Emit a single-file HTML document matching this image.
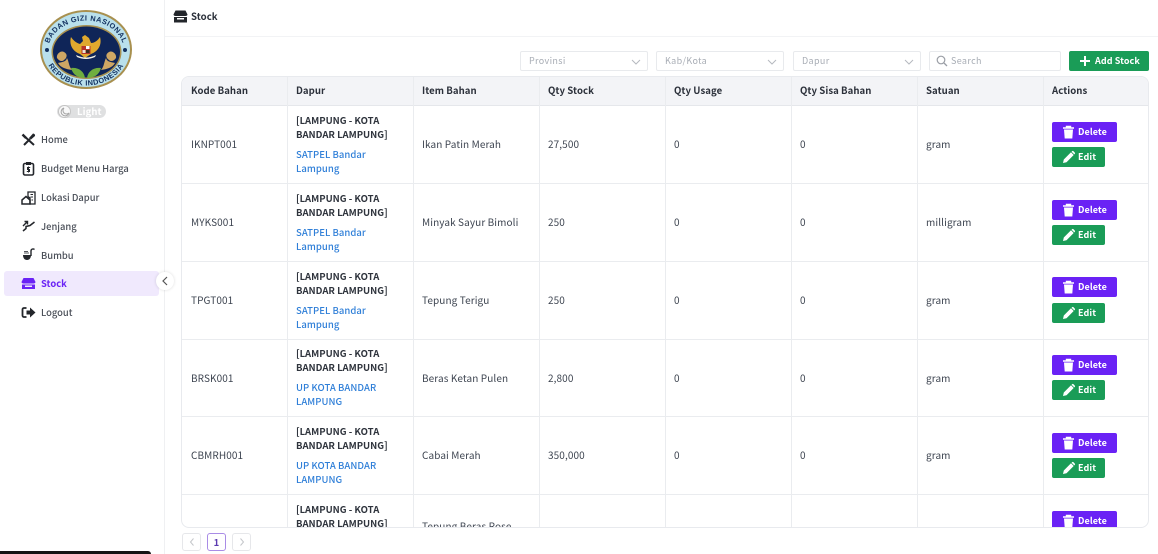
<!DOCTYPE html>
<html><head><meta charset="utf-8"><style>
*{box-sizing:border-box;margin:0;padding:0}
html,body{width:1158px;height:554px;overflow:hidden;background:#fff}
body{position:relative;font-family:"Noto Sans CJK JP","Liberation Sans",sans-serif;font-size:10px;color:#3d4450;letter-spacing:.1px}
.abs{position:absolute}
.nav{position:absolute;left:41px;font-size:9.4px;letter-spacing:0;font-weight:500;color:#4a4f58;line-height:14px;white-space:nowrap}
.ic{position:absolute;left:21px;width:15px;height:15px}
.sel{position:absolute;top:51px;height:20px;border:1px solid #e8eaed;border-radius:2px;color:#a8adb5;font-size:9px;letter-spacing:.35px;line-height:17px;padding-left:8px}
.sel svg{position:absolute;right:6px;top:6px}
.tw{position:absolute;left:181px;top:76px;width:968px;height:452px;border:1px solid #e8eaee;border-radius:8px;overflow:hidden}
.h{position:absolute;left:0;top:0;width:968px;height:29px;background:#f3f4f7;border-bottom:1px solid #e5e7eb}
.v{position:absolute;top:0;width:1px;height:452px;background:#eaecef}
.l{position:absolute;left:0;width:968px;height:1px;background:#eaecef}
.t{position:absolute;white-space:nowrap;line-height:14px;margin-top:-1px}
.th{font-weight:700;font-size:9.6px;letter-spacing:.05px;color:#2b303a;top:7px}
.d{font-weight:700;color:#2f343d;font-size:9.5px;letter-spacing:0;margin-top:0}
.s{color:#2f7fd8;font-weight:500;font-size:9.5px;letter-spacing:.05px}
.btn{position:absolute;height:20px;border-radius:2px;color:#fff;font-weight:600;font-size:9px;letter-spacing:.08px;line-height:20px;white-space:nowrap}
.del{left:870px;width:65px;background:#6a22f5}
.ed{left:870px;width:53px;background:#1a9c57}
.btn svg{position:absolute;left:10px;top:3px}
.btn span{position:absolute;left:26px;top:0}
.pg{position:absolute;top:533px;width:19px;height:18px;border:1px solid #e6e7ea;border-radius:3px;text-align:center}
</style></head><body>
<div class="abs" style="left:164px;top:0;width:1px;height:554px;background:#eff0f2"></div>
<div class="abs" style="left:165px;top:36px;width:993px;height:1px;background:#f2f3f5"></div>

<svg class="abs" style="left:38px;top:8px" width="96" height="84" viewBox="0 0 96 84">
<defs><path id="a1" d="M10 43A38 30.500 0 0 1 86 43"/><path id="a2" d="M7 44A41 33.500 0 0 0 89 44"/></defs>
<ellipse cx="48" cy="41.5" rx="46" ry="39.500" fill="#a8904f"/>
<ellipse cx="48" cy="41.5" rx="44" ry="37.500" fill="#b9e0ec"/>
<ellipse cx="48.500" cy="44" rx="35" ry="27" fill="#a8904f"/>
<ellipse cx="48.500" cy="44" rx="33.500" ry="25.500" fill="#0f2558"/>
<text font-family="Liberation Sans,sans-serif" font-size="7.400" font-weight="700" fill="#12305f" letter-spacing=".45"><textPath href="#a1" startOffset="50%" text-anchor="middle">BADAN GIZI NASIONAL</textPath></text>
<text font-family="Liberation Sans,sans-serif" font-size="7.400" font-weight="700" fill="#12305f" letter-spacing=".45"><textPath href="#a2" startOffset="50%" text-anchor="middle">REPUBLIK INDONESIA</textPath></text>
<circle cx="9" cy="42" r="2" fill="#12305f"/><circle cx="87" cy="42" r="2" fill="#12305f"/>
<path d="M33 29C31 36 34 43 42 46L47 50L53 46C61 43 64 36 62 29C60 32 57 35 53 35L51 30L47 27L44 29L45 33L42 36C38 35 35 32 33 29Z" fill="#e0a92e"/>
<rect x="43.500" y="38" width="9" height="8" fill="#b8352b"/><rect x="48" y="38" width="3.500" height="3" fill="#fff"/><rect x="44.500" y="42" width="3" height="3" fill="#e8e4d6"/><rect x="48" y="42" width="3.500" height="3" fill="#3a2c20"/>
<path d="M38 47Q48 52 58 47L57 49Q48 53 39 49Z" fill="#f3f0e4"/>
<path d="M19 50C18 46 23 42 26 44C30 46 29 50 26 52C24 54 21 53 19 50ZM20 55C24 54 28 54 29 50C31 54 31 59 34 62C28 61 23 60 20 55Z" fill="#cfa764"/>
<path d="M78 50C79 46 74 42 71 44C67 46 68 50 71 52C73 54 76 53 78 50ZM77 55C73 54 69 54 68 50C66 54 66 59 63 62C69 61 74 60 77 55Z" fill="#cfa764"/>
<path d="M33 60C40 59 46 63 47 70C40 70 35 67 33 60Z" fill="#6fae3f"/><path d="M63 60C56 59 50 63 49 70C56 70 61 67 63 60Z" fill="#6fae3f"/>
</svg>

<div class="abs" style="left:57px;top:105px;width:49px;height:13px;border-radius:7px;background:#dfe0e1"></div>
<div class="abs" style="left:58px;top:105px;width:13px;height:13px;border-radius:50%;background:#f8f8f8;border:1px solid #c4c4c4"></div>
<svg class="abs" style="left:60px;top:107px" width="10" height="10" viewBox="0 0 10 10"><path d="M4 1A4 4 0 1 0 9 6A3.400 3.400 0 0 1 4 1Z" fill="none" stroke="#a5a5a5" stroke-width="1"/></svg>
<div class="abs" style="left:77px;top:104px;font-size:9.500px;font-weight:700;color:#fff;line-height:15px">Light</div>

<div class="abs" style="left:4px;top:271px;width:155px;height:25px;border-radius:3px;background:#f0e9fd"></div>

<svg class="ic" style="top:132px" viewBox="0 0 15 15"><path d="M2 3L13 13M3 13L9 7" stroke="#23262b" stroke-width="2" fill="none"/><path d="M8 6L12 1.500A2 2 0 0 1 14 4L10 7.500Z" fill="#23262b"/><path d="M1.500 2.500L5 6" stroke="#23262b" stroke-width="2.400"/></svg>
<div class="nav" style="top:132px">Home</div>
<svg class="ic" style="top:161px" viewBox="0 0 15 15"><rect x="2.500" y="2.500" width="10" height="11.500" rx="1.500" fill="none" stroke="#23262b" stroke-width="1.600"/><rect x="5" y="1" width="5" height="3" fill="#23262b"/><path d="M9.200 6.500H6.500V8.500H8.500V10.500H5.800M7.500 5.500V11.500" stroke="#23262b" fill="none"/></svg>
<div class="nav" style="top:161px">Budget Menu Harga</div>
<svg class="ic" style="top:190px" viewBox="0 0 15 15"><path d="M7 2H14V14H9V8L7 6.500Z" fill="none" stroke="#23262b" stroke-width="1.300"/><path d="M1 10L5 6.500L9 10V14H1Z" fill="none" stroke="#23262b" stroke-width="1.500"/><path d="M9.500 4.500H12M9.500 7H12M10.500 10H12" stroke="#23262b"/></svg>
<div class="nav" style="top:190px">Lokasi Dapur</div>
<svg class="ic" style="top:218px" viewBox="0 0 15 15"><path d="M2 13L5 10.500V8.500L9 7.500L13.500 4" stroke="#23262b" stroke-width="1.500" fill="none"/><path d="M2 8L6 4M3.500 3.500H6.500V6.500" stroke="#23262b" stroke-width="1.400" fill="none"/></svg>
<div class="nav" style="top:219px">Jenjang</div>
<svg class="ic" style="top:247px" viewBox="0 0 15 15"><path d="M2 8H10C10 11 8.500 13 6 13C3.500 13 2 11 2 8Z" fill="#23262b"/><path d="M10 9V4C10 2 12 1.500 13.500 2.500" stroke="#23262b" stroke-width="1.400" fill="none"/><path d="M3 6H8M3 4.500H7" stroke="#55585e" stroke-width=".9"/></svg>
<div class="nav" style="top:248px">Bumbu</div>
<svg class="ic" style="top:276px" viewBox="0 0 15 15"><path d="M2.500 2H12.500L14.500 6C14.500 7 13.500 7.500 12.500 7.500H2.500C1.500 7.500 .5 7 .5 6Z" fill="#6a22f5"/><path d="M1 8.500H14V13H1Z" fill="#6a22f5"/><rect x="4" y="9.500" width="7" height="1.500" fill="#f0e9fd"/></svg>
<div class="nav" style="top:276px;color:#6a22f5;font-weight:700">Stock</div>
<svg class="ic" style="top:305px" viewBox="0 0 15 15"><path d="M5.500 3H3A1.500 1.500 0 0 0 1.500 4.500V10.500A1.500 1.500 0 0 0 3 12H5.500" stroke="#23262b" stroke-width="1.800" fill="none"/><path d="M5.500 5.500H9V2.500L14.500 7.500L9 12.500V9.500H5.500Z" fill="#23262b"/></svg>
<div class="nav" style="top:305px">Logout</div>

<div class="abs" style="left:156px;top:272px;width:18px;height:18px;border-radius:50%;background:#fff;box-shadow:0 0 3px rgba(0,0,0,.14)"></div>
<svg class="abs" style="left:161px;top:276px" width="8" height="10" viewBox="0 0 8 10"><path d="M6 1L2 5L6 9" stroke="#555" stroke-width="1.200" fill="none"/></svg>
<div class="abs" style="left:0;top:551px;width:151px;height:3px;background:#141414;border-radius:0 3px 0 0"></div>

<svg class="abs" style="left:173px;top:10px" width="15" height="13" viewBox="0 0 15 13"><path d="M2.500 .5H12.500L14.500 4.500C14.500 5.500 13.500 6 12.500 6H2.500C1.500 6 .5 5.500 .5 4.500Z" fill="#23262b"/><path d="M1 7H14V12.500H1Z" fill="#23262b"/><rect x="4" y="8" width="7" height="1.500" fill="#fff"/></svg>
<div class="abs" style="left:191px;top:9px;font-size:9.600px;letter-spacing:.05px;font-weight:700;color:#2b303a;line-height:15px">Stock</div>

<div class="sel" style="left:520px;width:128px">Provinsi<svg width="10" height="8" viewBox="0 0 10 8"><path d="M1 2L5 6L9 2" stroke="#b5b9bf" fill="none"/></svg></div>
<div class="sel" style="left:656px;width:128px">Kab/Kota<svg width="10" height="8" viewBox="0 0 10 8"><path d="M1 2L5 6L9 2" stroke="#b5b9bf" fill="none"/></svg></div>
<div class="sel" style="left:793px;width:128px">Dapur<svg width="10" height="8" viewBox="0 0 10 8"><path d="M1 2L5 6L9 2" stroke="#b5b9bf" fill="none"/></svg></div>
<div class="sel" style="left:929px;width:132px;padding-left:21px">Search<svg style="left:6px;right:auto;top:3px" width="12" height="12" viewBox="0 0 12 12"><circle cx="5" cy="5" r="3.800" stroke="#9a9ea5" stroke-width="1.200" fill="none"/><path d="M8 8L11 11" stroke="#9a9ea5" stroke-width="1.300"/></svg></div>
<div class="btn" style="left:1069px;top:51px;width:80px;background:#1a9c57"><svg style="top:4px" width="12" height="12" viewBox="0 0 12 12"><path d="M6 1V11M1 6H11" stroke="#fff" stroke-width="2"/></svg><span>Add Stock</span></div>

<div class="tw">
<div class="h"></div>
<div class="v" style="left:105px"></div><div class="v" style="left:231px"></div><div class="v" style="left:357px"></div><div class="v" style="left:483px"></div><div class="v" style="left:609px"></div><div class="v" style="left:735px"></div><div class="v" style="left:861px"></div>
<div class="t th" style="left:9px">Kode Bahan</div><div class="t th" style="left:114px">Dapur</div><div class="t th" style="left:240px">Item Bahan</div><div class="t th" style="left:366px">Qty Stock</div><div class="t th" style="left:492px">Qty Usage</div><div class="t th" style="left:618px">Qty Sisa Bahan</div><div class="t th" style="left:744px">Satuan</div><div class="t th" style="left:870px">Actions</div>

<div class="l" style="top:106px"></div><div class="l" style="top:184px"></div><div class="l" style="top:262px"></div><div class="l" style="top:339px"></div><div class="l" style="top:417px"></div>

<div class="t" style="left:9px;top:61px">IKNPT001</div>
<div class="t d" style="left:114px;top:36px">[LAMPUNG - KOTA</div><div class="t d" style="left:114px;top:50px">BANDAR LAMPUNG]</div><div class="t s" style="left:114px;top:71px">SATPEL Bandar</div><div class="t s" style="left:114px;top:85px">Lampung</div>
<div class="t" style="left:240px;top:61px">Ikan Patin Merah</div><div class="t" style="left:366px;top:61px">27,500</div><div class="t" style="left:492px;top:61px">0</div><div class="t" style="left:618px;top:61px">0</div><div class="t" style="left:744px;top:61px">gram</div>
<div class="btn del" style="top:45px"><svg width="13" height="14" viewBox="0 0 13 14"><path d="M1 3H12M4.500 3V1.500H8.500V3" stroke="#fff" stroke-width="1.400" fill="none"/><path d="M2 4.500H11L10.300 13.500H2.700Z" fill="#fff"/></svg><span>Delete</span></div>
<div class="btn ed" style="top:70px"><svg width="14" height="14" viewBox="0 0 14 14"><path d="M1 13L1.800 9.500L9 2.300L11.700 5L4.500 12.200ZM10 1.300A1 1 0 0 1 11.500 1.300L12.700 2.500A1 1 0 0 1 12.700 4L12.300 4.400L9.600 1.700Z" fill="#fff"/></svg><span>Edit</span></div>

<div class="t" style="left:9px;top:139px">MYKS001</div>
<div class="t d" style="left:114px;top:114px">[LAMPUNG - KOTA</div><div class="t d" style="left:114px;top:128px">BANDAR LAMPUNG]</div><div class="t s" style="left:114px;top:149px">SATPEL Bandar</div><div class="t s" style="left:114px;top:163px">Lampung</div>
<div class="t" style="left:240px;top:139px">Minyak Sayur Bimoli</div><div class="t" style="left:366px;top:139px">250</div><div class="t" style="left:492px;top:139px">0</div><div class="t" style="left:618px;top:139px">0</div><div class="t" style="left:744px;top:139px">milligram</div>
<div class="btn del" style="top:123px"><svg width="13" height="14" viewBox="0 0 13 14"><path d="M1 3H12M4.500 3V1.500H8.500V3" stroke="#fff" stroke-width="1.400" fill="none"/><path d="M2 4.500H11L10.300 13.500H2.700Z" fill="#fff"/></svg><span>Delete</span></div>
<div class="btn ed" style="top:148px"><svg width="14" height="14" viewBox="0 0 14 14"><path d="M1 13L1.800 9.500L9 2.300L11.700 5L4.500 12.200ZM10 1.300A1 1 0 0 1 11.500 1.300L12.700 2.500A1 1 0 0 1 12.700 4L12.300 4.400L9.600 1.700Z" fill="#fff"/></svg><span>Edit</span></div>

<div class="t" style="left:9px;top:217px">TPGT001</div>
<div class="t d" style="left:114px;top:192px">[LAMPUNG - KOTA</div><div class="t d" style="left:114px;top:206px">BANDAR LAMPUNG]</div><div class="t s" style="left:114px;top:227px">SATPEL Bandar</div><div class="t s" style="left:114px;top:241px">Lampung</div>
<div class="t" style="left:240px;top:217px">Tepung Terigu</div><div class="t" style="left:366px;top:217px">250</div><div class="t" style="left:492px;top:217px">0</div><div class="t" style="left:618px;top:217px">0</div><div class="t" style="left:744px;top:217px">gram</div>
<div class="btn del" style="top:200px"><svg width="13" height="14" viewBox="0 0 13 14"><path d="M1 3H12M4.500 3V1.500H8.500V3" stroke="#fff" stroke-width="1.400" fill="none"/><path d="M2 4.500H11L10.300 13.500H2.700Z" fill="#fff"/></svg><span>Delete</span></div>
<div class="btn ed" style="top:226px"><svg width="14" height="14" viewBox="0 0 14 14"><path d="M1 13L1.800 9.500L9 2.300L11.700 5L4.500 12.200ZM10 1.300A1 1 0 0 1 11.500 1.300L12.700 2.500A1 1 0 0 1 12.700 4L12.300 4.400L9.600 1.700Z" fill="#fff"/></svg><span>Edit</span></div>

<div class="t" style="left:9px;top:295px">BRSK001</div>
<div class="t d" style="left:114px;top:269px">[LAMPUNG - KOTA</div><div class="t d" style="left:114px;top:283px">BANDAR LAMPUNG]</div><div class="t s" style="left:114px;top:304px">UP KOTA BANDAR</div><div class="t s" style="left:114px;top:318px">LAMPUNG</div>
<div class="t" style="left:240px;top:295px">Beras Ketan Pulen</div><div class="t" style="left:366px;top:295px">2,800</div><div class="t" style="left:492px;top:295px">0</div><div class="t" style="left:618px;top:295px">0</div><div class="t" style="left:744px;top:295px">gram</div>
<div class="btn del" style="top:278px"><svg width="13" height="14" viewBox="0 0 13 14"><path d="M1 3H12M4.500 3V1.500H8.500V3" stroke="#fff" stroke-width="1.400" fill="none"/><path d="M2 4.500H11L10.300 13.500H2.700Z" fill="#fff"/></svg><span>Delete</span></div>
<div class="btn ed" style="top:303px"><svg width="14" height="14" viewBox="0 0 14 14"><path d="M1 13L1.800 9.500L9 2.300L11.700 5L4.500 12.200ZM10 1.300A1 1 0 0 1 11.500 1.300L12.700 2.500A1 1 0 0 1 12.700 4L12.300 4.400L9.600 1.700Z" fill="#fff"/></svg><span>Edit</span></div>

<div class="t" style="left:9px;top:372px">CBMRH001</div>
<div class="t d" style="left:114px;top:347px">[LAMPUNG - KOTA</div><div class="t d" style="left:114px;top:361px">BANDAR LAMPUNG]</div><div class="t s" style="left:114px;top:382px">UP KOTA BANDAR</div><div class="t s" style="left:114px;top:396px">LAMPUNG</div>
<div class="t" style="left:240px;top:372px">Cabai Merah</div><div class="t" style="left:366px;top:372px">350,000</div><div class="t" style="left:492px;top:372px">0</div><div class="t" style="left:618px;top:372px">0</div><div class="t" style="left:744px;top:372px">gram</div>
<div class="btn del" style="top:356px"><svg width="13" height="14" viewBox="0 0 13 14"><path d="M1 3H12M4.500 3V1.500H8.500V3" stroke="#fff" stroke-width="1.400" fill="none"/><path d="M2 4.500H11L10.300 13.500H2.700Z" fill="#fff"/></svg><span>Delete</span></div>
<div class="btn ed" style="top:381px"><svg width="14" height="14" viewBox="0 0 14 14"><path d="M1 13L1.800 9.500L9 2.300L11.700 5L4.500 12.200ZM10 1.300A1 1 0 0 1 11.500 1.300L12.700 2.500A1 1 0 0 1 12.700 4L12.300 4.400L9.600 1.700Z" fill="#fff"/></svg><span>Edit</span></div>

<div class="t d" style="left:114px;top:425px">[LAMPUNG - KOTA</div><div class="t d" style="left:114px;top:439px">BANDAR LAMPUNG]</div>
<div class="t" style="left:240px;top:442px;margin-top:0">Tepung Beras Rose</div>
<div class="btn del" style="top:434px"><svg width="13" height="14" viewBox="0 0 13 14"><path d="M1 3H12M4.500 3V1.500H8.500V3" stroke="#fff" stroke-width="1.400" fill="none"/><path d="M2 4.500H11L10.300 13.500H2.700Z" fill="#fff"/></svg><span>Delete</span></div>
</div>

<div class="pg" style="left:182px"><svg width="8" height="10" viewBox="0 0 8 10" style="margin-top:3px"><path d="M5.500 1.500L2.500 5L5.500 8.500" stroke="#c4c6ca" fill="none"/></svg></div>
<div class="pg" style="left:207px;border-color:#a98ce6;color:#5b3ab0;font-weight:700;font-size:9.500px;line-height:16px">1</div>
<div class="pg" style="left:232px"><svg width="8" height="10" viewBox="0 0 8 10" style="margin-top:3px"><path d="M2.500 1.500L5.500 5L2.500 8.500" stroke="#c4c6ca" fill="none"/></svg></div>
</body></html>
